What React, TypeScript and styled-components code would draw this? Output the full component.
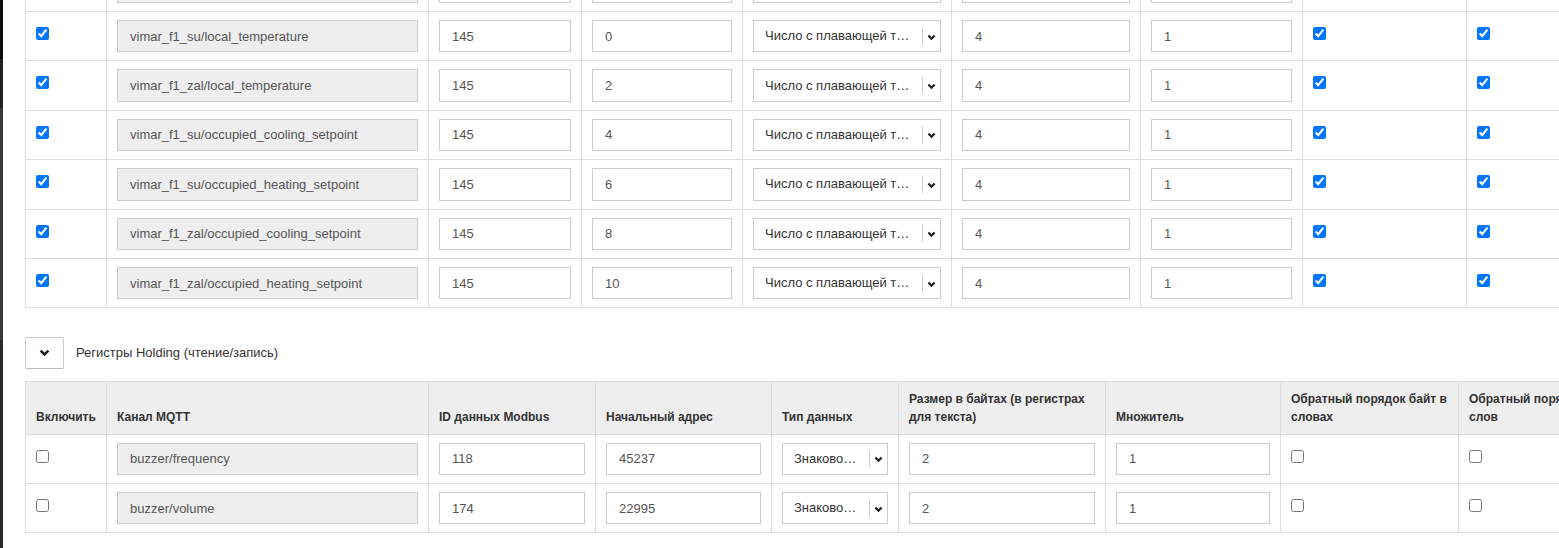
import React from "react";
import styled, { createGlobalStyle } from "styled-components";

const GlobalStyle = createGlobalStyle`
  html, body { margin: 0; padding: 0; background: #fff; overflow: hidden; }
  body {
    font-family: "Liberation Sans", Arial, sans-serif;
    font-size: 13px;
    line-height: 18px;
    color: #333;
  }
  * { box-sizing: border-box; }
`;

const Page = styled.div`
  display: flex;
  width: 100vw;
  height: 548px;
  overflow: hidden;
`;

const SideStrip = styled.div`
  flex: none;
  width: 3px;
  background: linear-gradient(
    to bottom,
    #0b0b0b 0 59px,
    #222 59px 108px,
    #383838 108px 340px,
    #2a2a2a 340px 100%
  );
`;

const Main = styled.main`
  flex: 1;
  min-width: 0;
  padding-left: 22px;
  overflow: hidden;
`;

const Table = styled.table<{ $shift?: number; $width: number }>`
  border-collapse: collapse;
  table-layout: fixed;
  width: ${(p) => p.$width}px;
  min-width: ${(p) => p.$width}px;
  border: 1px solid #ddd;
  margin-top: ${(p) => p.$shift ?? 0}px;
`;

const Col = styled.col<{ $w: number }>`
  width: ${(p) => p.$w}px;
`;

const Th = styled.th`
  background: #eee;
  border: 1px solid #ddd;
  padding: 8px 10px;
  text-align: left;
  vertical-align: bottom;
  font-weight: bold;
  font-size: 12px;
  line-height: 18px;
  color: #333;
`;

const Td = styled.td`
  border: 1px solid #ddd;
  padding: 8px 10px;
  vertical-align: top;
`;

const Input = styled.input<{ $readonly?: boolean }>`
  display: block;
  width: 100%;
  height: 32.4px;
  margin: 0;
  padding: 0 12px;
  border: 1px solid #ccc;
  border-radius: 0;
  background: ${(p) => (p.$readonly ? "#eee" : "#fff")};
  font-family: "Liberation Sans", Arial, sans-serif;
  font-size: 13px;
  color: #555;
  outline: none;
`;

const Check = styled.input`
  display: block;
  width: 13px;
  height: 13px;
  margin: 7px 0 0 0;
`;

const SelectBox = styled.div`
  display: flex;
  align-items: center;
  height: 32.4px;
  border: 1px solid #ccc;
  background: #fff;
  padding-left: 11px;
  color: #333;
`;

const SelectText = styled.span`
  flex: 1;
  min-width: 0;
  overflow: hidden;
  white-space: nowrap;
  margin-right: 6px;
`;

const SelectSep = styled.span`
  flex: none;
  width: 1px;
  height: 17px;
  background: #ccc;
`;

const SelectArrow = styled.span`
  flex: none;
  display: flex;
  align-items: center;
  padding: 1px 4px 0 4px;
`;

const SectionHeader = styled.div`
  display: flex;
  align-items: center;
  gap: 12px;
  margin: 29px 0 11.5px 0;
`;

const ToggleButton = styled.button`
  display: flex;
  align-items: center;
  justify-content: center;
  width: 39px;
  height: 31.7px;
  padding: 0 0 2px 0;
  background: #fff;
  border: 1px solid #ccc;
  border-bottom-color: #bbb;
  border-radius: 2px;
  cursor: pointer;
`;

const SectionLabel = styled.span`
  color: #333;
  font-size: 13px;
`;

const Chevron = ({ w, h, sw }: { w: number; h: number; sw: number }) => (
  <svg width={w} height={h} viewBox={`0 0 ${w} ${h}`}>
    <polyline
      points={`${sw / 2 + 0.3},${sw / 2 + 0.3} ${w / 2},${h - sw / 2 - 0.2} ${w - sw / 2 - 0.3},${sw / 2 + 0.3}`}
      fill="none"
      stroke="#222"
      strokeWidth={sw}
      strokeLinecap="butt"
      strokeLinejoin="miter"
    />
  </svg>
);

const Select = ({ text }: { text: string }) => (
  <SelectBox>
    <SelectText>{text}</SelectText>
    <SelectSep />
    <SelectArrow>
      <Chevron w={9} h={6} sw={2.2} />
    </SelectArrow>
  </SelectBox>
);

type Row = {
  on: boolean;
  ch: string;
  id: string;
  addr: string;
  type: string;
  size: string;
  mult: string;
  b1: boolean;
  b2: boolean;
};

/* Shown as the closed select displays them, shortened to fit. */
const FLOAT = "Число с плавающей т…";
const SIGNED = "Знаково…";

const inputRows: Row[] = [
  { on: true, ch: "vimar_f1_su/local_temperature", id: "145", addr: "0", type: FLOAT, size: "4", mult: "1", b1: true, b2: true },
  { on: true, ch: "vimar_f1_zal/local_temperature", id: "145", addr: "2", type: FLOAT, size: "4", mult: "1", b1: true, b2: true },
  { on: true, ch: "vimar_f1_su/occupied_cooling_setpoint", id: "145", addr: "4", type: FLOAT, size: "4", mult: "1", b1: true, b2: true },
  { on: true, ch: "vimar_f1_su/occupied_heating_setpoint", id: "145", addr: "6", type: FLOAT, size: "4", mult: "1", b1: true, b2: true },
  { on: true, ch: "vimar_f1_zal/occupied_cooling_setpoint", id: "145", addr: "8", type: FLOAT, size: "4", mult: "1", b1: true, b2: true },
  { on: true, ch: "vimar_f1_zal/occupied_heating_setpoint", id: "145", addr: "10", type: FLOAT, size: "4", mult: "1", b1: true, b2: true },
];

const holdingRows: Row[] = [
  { on: false, ch: "buzzer/frequency", id: "118", addr: "45237", type: SIGNED, size: "2", mult: "1", b1: false, b2: false },
  { on: false, ch: "buzzer/volume", id: "174", addr: "22995", type: SIGNED, size: "2", mult: "1", b1: false, b2: false },
];

const topCols = [81, 322, 153, 161, 209, 189, 162, 164, 150];
const bottomCols = [81, 322, 167, 176, 127, 207, 175, 178, 150];
const sum = (a: number[]) => a.reduce((s, v) => s + v, 0);

const headers = [
  "Включить",
  "Канал MQTT",
  "ID данных Modbus",
  "Начальный адрес",
  "Тип данных",
  "Размер в байтах (в регистрах для текста)",
  "Множитель",
  "Обратный порядок байт в словах",
  "Обратный порядок слов",
];

const DataRow = ({ r }: { r: Row }) => (
  <tr>
    <Td>
      <Check type="checkbox" checked={r.on} readOnly />
    </Td>
    <Td>
      <Input $readonly readOnly value={r.ch} />
    </Td>
    <Td>
      <Input readOnly value={r.id} />
    </Td>
    <Td>
      <Input readOnly value={r.addr} />
    </Td>
    <Td>
      <Select text={r.type} />
    </Td>
    <Td>
      <Input readOnly value={r.size} />
    </Td>
    <Td>
      <Input readOnly value={r.mult} />
    </Td>
    <Td>
      <Check type="checkbox" checked={r.b1} readOnly />
    </Td>
    <Td>
      <Check type="checkbox" checked={r.b2} readOnly />
    </Td>
  </tr>
);

/* The row above the visible area: only the lower edges of its fields show. */
const ClippedRow = () => (
  <tr>
    <Td />
    <Td>
      <Input $readonly readOnly value="" />
    </Td>
    <Td>
      <Input readOnly value="" />
    </Td>
    <Td>
      <Input readOnly value="" />
    </Td>
    <Td>
      <SelectBox />
    </Td>
    <Td>
      <Input readOnly value="" />
    </Td>
    <Td>
      <Input readOnly value="" />
    </Td>
    <Td />
    <Td />
  </tr>
);

export default function App() {
  return (
    <>
      <GlobalStyle />
      <Page>
        <SideStrip />
        <Main>
          <Table $shift={-38.4} $width={sum(topCols)}>
            <colgroup>
              {topCols.map((w, i) => (
                <Col key={i} $w={w} />
              ))}
            </colgroup>
            <tbody>
              <ClippedRow />
              {inputRows.map((r, i) => (
                <DataRow key={i} r={r} />
              ))}
            </tbody>
          </Table>

          <SectionHeader>
            <ToggleButton type="button" aria-label="toggle">
              <Chevron w={11} h={7} sw={2.6} />
            </ToggleButton>
            <SectionLabel>Регистры Holding (чтение/запись)</SectionLabel>
          </SectionHeader>

          <Table $width={sum(bottomCols)}>
            <colgroup>
              {bottomCols.map((w, i) => (
                <Col key={i} $w={w} />
              ))}
            </colgroup>
            <thead>
              <tr>
                {headers.map((h) => (
                  <Th key={h}>{h}</Th>
                ))}
              </tr>
            </thead>
            <tbody>
              {holdingRows.map((r, i) => (
                <DataRow key={i} r={r} />
              ))}
            </tbody>
          </Table>
        </Main>
      </Page>
    </>
  );
}
